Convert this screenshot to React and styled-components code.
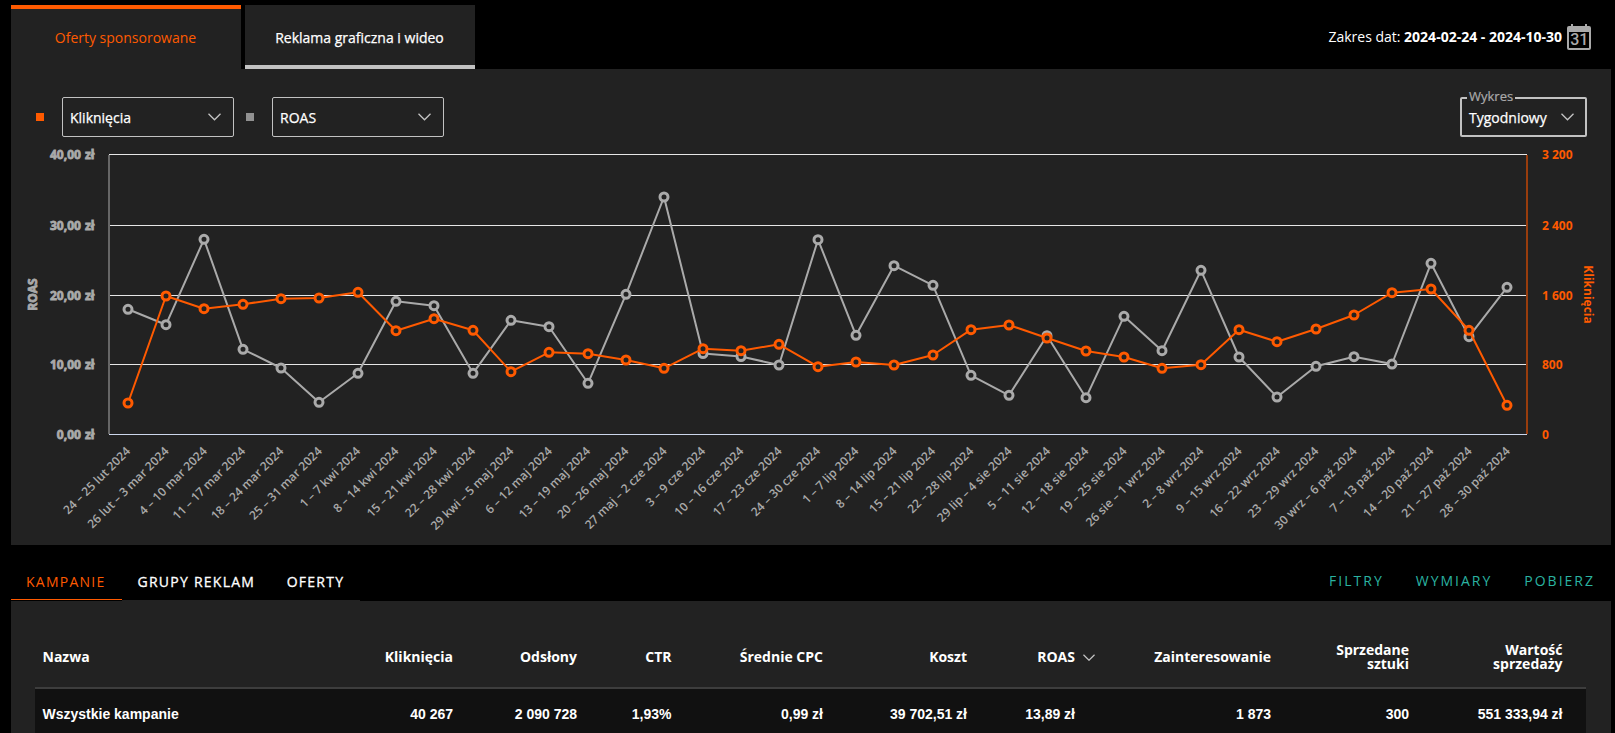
import React from 'react'
import styled, { createGlobalStyle } from 'styled-components'

const weeks = [
  ['24 – 25 lut 2024', 309.3, 403],
  ['26 lut – 3 mar 2024', 324.7, 296],
  ['4 – 10 mar 2024', 239.3, 308.7],
  ['11 – 17 mar 2024', 349.3, 304.3],
  ['18 – 24 mar 2024', 368, 298.7],
  ['25 – 31 mar 2024', 402.3, 298],
  ['1 – 7 kwi 2024', 373.3, 292.3],
  ['8 – 14 kwi 2024', 301.3, 330.7],
  ['15 – 21 kwi 2024', 305.7, 318.7],
  ['22 – 28 kwi 2024', 373.3, 330.3],
  ['29 kwi – 5 maj 2024', 320.3, 371.7],
  ['6 – 12 maj 2024', 326.7, 352.3],
  ['13 – 19 maj 2024', 383.3, 353.7],
  ['20 – 26 maj 2024', 294.3, 360],
  ['27 maj – 2 cze 2024', 197, 368.3],
  ['3 – 9 cze 2024', 353.5, 348.7],
  ['10 – 16 cze 2024', 356.5, 350.7],
  ['17 – 23 cze 2024', 365, 344.3],
  ['24 – 30 cze 2024', 239.7, 366.7],
  ['1 – 7 lip 2024', 335.3, 362],
  ['8 – 14 lip 2024', 265.7, 365],
  ['15 – 21 lip 2024', 285.3, 355],
  ['22 – 28 lip 2024', 375.3, 329.7],
  ['29 lip – 4 sie 2024', 395.3, 325],
  ['5 – 11 sie 2024', 335.7, 338],
  ['12 – 18 sie 2024', 397.7, 351],
  ['19 – 25 sie 2024', 316.3, 357],
  ['26 sie – 1 wrz 2024', 350.7, 368.3],
  ['2 – 8 wrz 2024', 270.3, 364.7],
  ['9 – 15 wrz 2024', 357, 329.7],
  ['16 – 22 wrz 2024', 397, 341.7],
  ['23 – 29 wrz 2024', 366.3, 329],
  ['30 wrz – 6 paź 2024', 356.7, 315],
  ['7 – 13 paź 2024', 364, 292.7],
  ['14 – 20 paź 2024', 263.3, 289],
  ['21 – 27 paź 2024', 336.7, 330.3],
  ['28 – 30 paź 2024', 287.3, 405.3],
]

const gridLines = [
  { y: 154.5, left: '40,00 zł', right: '3 200' },
  { y: 225.5, left: '30,00 zł', right: '2 400' },
  { y: 295.5, left: '20,00 zł', right: '1 600' },
  { y: 364.5, left: '10,00 zł', right: '800' },
  { y: 434.5, left: '0,00 zł', right: '0' },
]

const columns = [
  { title: 'Nazwa', value: 'Wszystkie kampanie' },
  { title: 'Kliknięcia', value: '40 267' },
  { title: 'Odsłony', value: '2 090 728' },
  { title: 'CTR', value: '1,93%' },
  { title: 'Średnie CPC', value: '0,99 zł' },
  { title: 'Koszt', value: '39 702,51 zł' },
  { title: 'ROAS', value: '13,89 zł', sorted: true },
  { title: 'Zainteresowanie', value: '1 873' },
  { title: 'Sprzedane sztuki', value: '300' },
  { title: 'Wartość sprzedaży', value: '551 333,94 zł' },
]

const pointX = (i) => Math.floor(128.16 + i * 38.326)

function Chevron({ size = 13 }) {
  return (
    <svg width={size} height={size * 8 / 13} viewBox="0 0 13 8">
      <path d="M0.5 0.8 L6.5 6.8 L12.5 0.8" fill="none" stroke="#c4c4c4" strokeWidth="1.3" />
    </svg>
  )
}

function CalendarIcon() {
  return (
    <svg width="24" height="26" viewBox="0 0 24 26">
      <path d="M4 0h2v2h12V0h2v2h2a2 2 0 0 1 2 2v20a2 2 0 0 1-2 2H2a2 2 0 0 1-2-2V4a2 2 0 0 1 2-2h2z M2 8v16h20V8z" fill="#aaa" fillRule="evenodd" />
      <CalendarDay x="12.3" y="21">31</CalendarDay>
    </svg>
  )
}

function Series({ index, color }) {
  return (
    <g stroke={color} fill="none">
      <polyline points={weeks.map((w, i) => `${pointX(i)},${w[index]}`).join(' ')} strokeWidth="2" strokeLinejoin="round" />
      {weeks.map((w, i) => (
        <circle key={w[0]} cx={pointX(i)} cy={w[index]} r="4" fill="#222" strokeWidth="3" />
      ))}
    </g>
  )
}

function Chart() {
  return (
    <ChartSvg width="1600" height="403" viewBox="11 142 1600 403">
      {gridLines.map((g) => (
        <line key={g.y} x1="109" x2="1527" y1={g.y} y2={g.y} stroke={g.right === '0' ? '#ccd6eb' : '#e6e6e6'} />
      ))}
      <rect x="108" y="155" width="2" height="279" fill="#666" />
      <rect x="1526" y="155" width="2" height="279" fill="#993d0d" />
      <Series index={1} color="#aaa" />
      <Series index={2} color="#ff5a00" />
      {gridLines.map((g) => (
        <g key={g.y}>
          <AxisLabel $outline x="94.5" y={g.y + 4.5} textAnchor="end" fill="#aaa">{g.left}</AxisLabel>
          <AxisLabel x="1542" y={g.y + 4.5} fill="#ff5a00">{g.right}</AxisLabel>
        </g>
      ))}
      {weeks.map((w, i) => (
        <WeekLabel key={w[0]} transform={`translate(${128.16 + i * 38.326 + 3} 452) rotate(-45)`}>{w[0]}</WeekLabel>
      ))}
      <AxisLabel $outline transform="translate(37 294.5) rotate(-90)" textAnchor="middle" fill="#aaa">ROAS</AxisLabel>
      <AxisLabel transform="translate(1584 294.5) rotate(90)" textAnchor="middle" fill="#ff5a00">Kliknięcia</AxisLabel>
    </ChartSvg>
  )
}

export default function App() {
  return (
    <Page>
      <GlobalStyle />
      <Header>
        <Tabs>
          <Tab $active>Oferty sponsorowane</Tab>
          <Tab>Reklama graficzna i wideo</Tab>
        </Tabs>
        <DateRange>
          <span>Zakres dat: <b>2024-02-24 - 2024-10-30</b></span>
          <CalendarIcon />
        </DateRange>
      </Header>

      <ChartPanel>
        <Controls>
          <Square $color="#ff5a00" />
          <Select $width={172}>Kliknięcia <Chevron /></Select>
          <Square $color="#919191" />
          <Select $width={172}>ROAS <Chevron /></Select>
          <Spacer />
          <Select $width={127} $thick>
            <Legend>Wykres</Legend>
            Tygodniowy <Chevron />
          </Select>
        </Controls>
        <Chart />
      </ChartPanel>

      <SubHeader>
        <SubTabs>
          <SubTab $active>Kampanie</SubTab>
          <SubTab>Grupy reklam</SubTab>
          <SubTab>Oferty</SubTab>
        </SubTabs>
        <Actions>
          <Action>Filtry</Action>
          <Action>Wymiary</Action>
          <Action>Pobierz</Action>
        </Actions>
      </SubHeader>

      <TablePanel>
        <HeadRow>
          {columns.map((c) => (
            <HeadCell key={c.title}>
              <span>{c.title}</span>
              {c.sorted && <SortIcon><Chevron size={12} /></SortIcon>}
            </HeadCell>
          ))}
        </HeadRow>
        <BodyRow>
          {columns.map((c) => <Cell key={c.title}>{c.value}</Cell>)}
        </BodyRow>
      </TablePanel>
    </Page>
  )
}

const GlobalStyle = createGlobalStyle`
body{
margin:0;
background:#000;
overflow:hidden;
}
*{
box-sizing:border-box;
}
`
const Page = styled.div`
display:flex;
flex-direction:column;
width:1615px;
height:733px;
padding:5px 4px 0 11px;
overflow:hidden;
background:#000;
color:#fff;
font-family:"Open Sans", sans-serif;
font-size:14px;
`
const Header = styled.header`
display:flex;
justify-content:space-between;
flex:none;
height:64px;
`
const Tabs = styled.div`
display:flex;
gap:4px;
`
const Tab = styled.div`
display:flex;
align-items:center;
justify-content:center;
width:230px;
padding-right:1px;
background:#222;
color:${(p) => (p.$active ? '#ff5a00' : '#fff')};
border-top:4px solid ${(p) => (p.$active ? '#ff5a00' : '#222')};
border-bottom:4px solid ${(p) => (p.$active ? '#222' : '#c2c2c2')};
-webkit-text-stroke:${(p) => (p.$active ? 0 : 0.25)}px #fff;
`
const DateRange = styled.div`
display:flex;
align-items:center;
gap:5px;
height:64px;
padding-right:20px;

span{
padding-bottom:2px;
}
b{
font-weight:700;
}
`
const CalendarDay = styled.text`
font:500 16px Roboto, sans-serif;
text-anchor:middle;
fill:#aaa;
`
const ChartPanel = styled.section`
flex:none;
height:476px;
background:#222;
`
const Controls = styled.div`
display:flex;
align-items:center;
height:73px;
padding:23px 24px 0 25px;
`
const Spacer = styled.div`
flex:1;
`
const Square = styled.i`
width:8px;
height:8px;
margin-right:18px;
background:${(p) => p.$color};
`
const Select = styled.div`
position:relative;
display:flex;
align-items:center;
justify-content:space-between;
width:${(p) => p.$width}px;
height:40px;
margin-right:${(p) => (p.$thick ? 0 : 12)}px;
padding:${(p) => (p.$thick ? '0 11px 0 7px' : '0 12px 0 7px')};
border:${(p) => (p.$thick ? 2 : 1)}px solid #c2c2c2;
border-radius:2px;
-webkit-text-stroke:0.25px #fff;

svg{
margin-top:-1px;
}
`
const Legend = styled.span`
position:absolute;
top:-12px;
left:5px;
padding:0 2px;
background:#222;
color:#aaa;
font-size:13px;
line-height:18px;
-webkit-text-stroke:0.2px #aaa;
`
const ChartSvg = styled.svg`
display:block;
`
const AxisLabel = styled.text`
font:700 12px "Open Sans", sans-serif;
stroke:${(p) => (p.$outline ? '#aaa' : 'none')};
stroke-width:0.8px;
word-spacing:${(p) => (p.$outline ? 1 : 0)}px;
`
const WeekLabel = styled.text`
font:600 12px "Open Sans", sans-serif;
text-anchor:end;
fill:#aaa;
`
const SubHeader = styled.div`
display:flex;
justify-content:space-between;
flex:none;
height:56px;
`
const SubTabs = styled.div`
display:flex;
height:56px;
padding-top:19px;
`
const SubTab = styled.div`
padding:${(p) => (p.$active ? '8px 16px 0 15px' : '8px 15.5px 0 16px')};
border-bottom:1px solid ${(p) => (p.$active ? '#ff5a00' : '#222')};
height:${(p) => (p.$active ? 36 : 37)}px;
color:${(p) => (p.$active ? '#ff5a00' : '#fff')};
font-weight:${(p) => (p.$active ? 400 : 500)};
letter-spacing:1.25px;
text-transform:uppercase;
-webkit-text-stroke:${(p) => (p.$active ? 0 : 0.3)}px #fff;
`
const Actions = styled.div`
display:flex;
gap:32px;
padding:26px 16px 0 0;
`
const Action = styled.span`
color:#2ab3a0;
letter-spacing:2px;
text-transform:uppercase;
`
const TablePanel = styled.section`
flex:1;
padding:26px 25px 0 24px;
background:#222;
`
const Row = styled.div`
display:grid;
grid-template-columns:200px 218px 124px 94.5px 151.5px 144px 108px 196px 138px 153.5px;
`
const HeadRow = styled(Row)`
align-items:center;
height:62px;
border-bottom:2px solid #3d3d3d;
font-weight:700;
line-height:14px;
`
const HeadCell = styled.div`
position:relative;
display:flex;
justify-content:flex-end;
text-align:right;

&:first-child{
justify-content:flex-start;
padding-left:7.5px;
}
&:nth-last-child(-n+2) span{
width:80px;
}
`
const SortIcon = styled.i`
position:absolute;
left:100%;
top:-1px;
margin-left:8px;
`
const BodyRow = styled(Row)`
height:50px;
background:#111;
font:700 14px/50px "Liberation Sans", sans-serif;
`
const Cell = styled.div`
text-align:right;

&:first-child{
text-align:left;
padding-left:7.5px;
}
`
